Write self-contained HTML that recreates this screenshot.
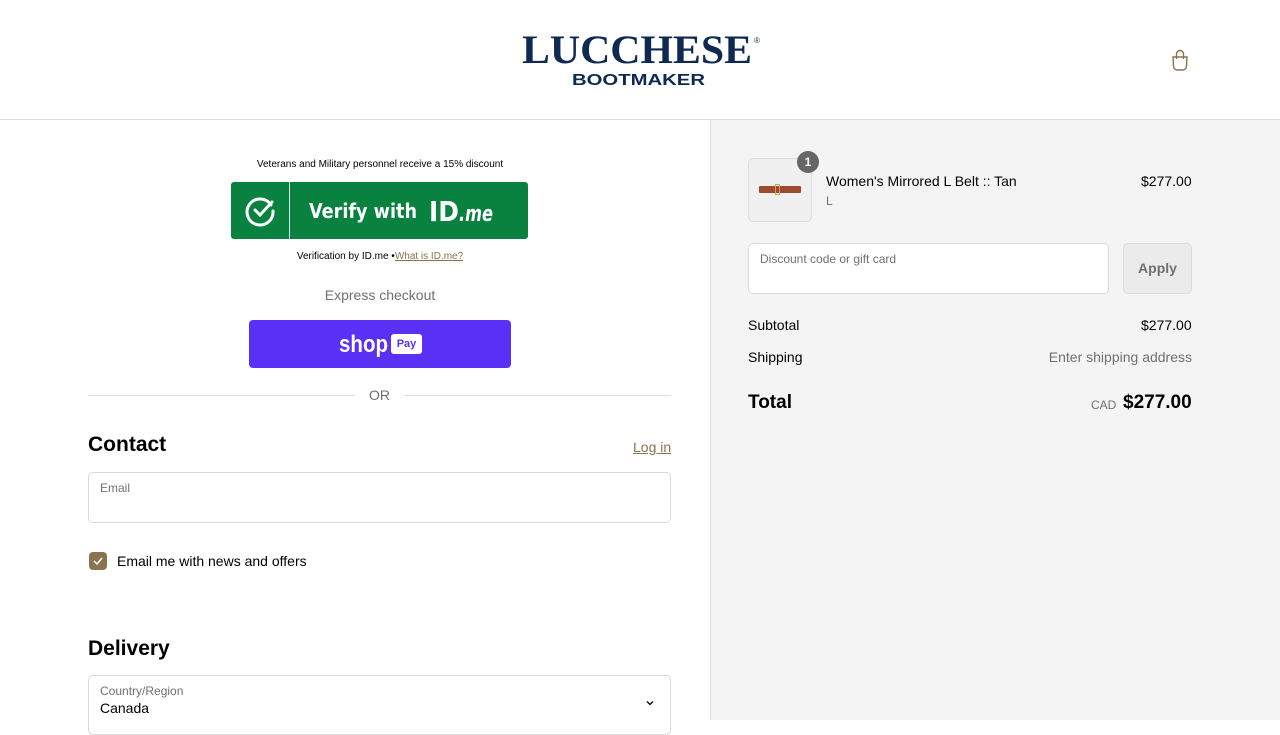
<!DOCTYPE html>
<html><head><meta charset="utf-8"><style>
*{box-sizing:border-box;margin:0;padding:0}
body{width:1280px;height:720px;overflow:hidden;font-family:"Liberation Sans",Arial,sans-serif;background:#fff;position:relative;color:#000}
.abs{position:absolute}
header{position:absolute;left:0;top:0;width:1280px;height:120px;border-bottom:1px solid #dedede;background:#fff}
.right{position:absolute;left:710px;top:120px;width:570px;height:600px;background:#f4f4f4;border-left:1px solid #dedede}
.field{position:absolute;border:1px solid #d9d9d9;border-radius:5px;background:#fff}
.lab{position:absolute;left:11px;top:8px;font-size:12px;color:#707070}
</style></head><body>
<header>
 <svg class="abs" style="left:520px;top:28px" width="250" height="62">
  <text x="2" y="35" font-family="Liberation Serif" font-weight="bold" font-size="40" fill="#0e2a52" textLength="230" lengthAdjust="spacingAndGlyphs">LUCCHESE</text>
  <text x="234" y="15" font-family="Liberation Sans" font-size="8" fill="#0e2a52">®</text>
  <text x="52" y="57" font-family="Liberation Sans" font-weight="bold" font-size="16" fill="#0e2a52" textLength="133" lengthAdjust="spacingAndGlyphs">BOOTMAKER</text>
 </svg>
 <svg class="abs" style="left:1170px;top:49px" width="20" height="22" viewBox="0 0 20 22" fill="none" stroke="#8a7350" stroke-width="1.4"><path d="M3 8h14l-0.5 9a4 4 0 0 1-4 4h-5a4 4 0 0 1-4-4z"/><path d="M6.5 10V5a3.5 3.5 0 0 1 7 0v5"/></svg>
</header>
<div class="abs" style="left:0;top:159px;width:760px;text-align:center;font-size:10px;color:#000">Veterans and Military personnel receive a 15% discount</div>
<div class="abs" style="left:231px;top:182px;width:297px;height:57px;background:#08823e;border-radius:3px">
 <div class="abs" style="left:58px;top:0;width:1px;height:57px;background:#e0f0e6"></div>
 <svg class="abs" style="left:14px;top:13px" width="32" height="32" viewBox="0 0 32 32" fill="none" stroke="#fff" stroke-width="3" stroke-linecap="round"><path d="M26 10A13 13 0 1 0 28 16"/><path d="M10 15l5 5 12-13"/></svg>
 <svg class="abs" style="left:78px;top:10px" width="190" height="36">
  <text x="0" y="26" font-family="DejaVu Sans" font-weight="bold" font-size="20" fill="#fff" textLength="108" lengthAdjust="spacingAndGlyphs">Verify with</text>
  <text x="120" y="29" font-family="DejaVu Sans" font-weight="bold" font-size="28" fill="#fff" textLength="30" lengthAdjust="spacingAndGlyphs">ID</text>
  <text x="150" y="29" font-family="DejaVu Sans" font-weight="bold" font-style="italic" font-size="22" fill="#fff" textLength="34" lengthAdjust="spacingAndGlyphs">.me</text>
 </svg>
</div>
<div class="abs" style="left:0;top:251px;width:760px;text-align:center;font-size:10px;color:#000">Verification by ID.me •<span style="color:#8a7350;text-decoration:underline">What is ID.me?</span></div>
<div class="abs" style="left:0;top:287px;width:760px;text-align:center;font-size:14px;color:#707070">Express checkout</div>
<div class="abs" style="left:249px;top:320px;width:262px;height:48px;background:#5a31f4;border-radius:4px">
 <svg class="abs" style="left:90px;top:8px" width="52" height="32"><text x="0" y="24" font-family="Liberation Sans" font-weight="bold" font-size="24" fill="#fff" textLength="49" lengthAdjust="spacingAndGlyphs">shop</text></svg>
 <div class="abs" style="left:142px;top:14px;width:31px;height:20px;background:#fff;border-radius:3px;color:#5a31f4;font-size:11px;font-weight:bold;text-align:center;line-height:20px">Pay</div>
</div>
<div class="abs" style="left:88px;top:395px;width:267px;height:1px;background:#dedede"></div>
<div class="abs" style="left:404px;top:395px;width:267px;height:1px;background:#dedede"></div>
<div class="abs" style="left:369px;top:387px;font-size:14px;color:#707070">OR</div>
<div class="abs" style="left:88px;top:433px;font-size:21px;font-weight:bold">Contact</div>
<div class="abs" style="left:633px;top:439px;font-size:14px;color:#8a7350;text-decoration:underline">Log in</div>
<div class="field" style="left:88px;top:472px;width:583px;height:51px"><div class="lab">Email</div></div>
<div class="abs" style="left:89px;top:552px;width:18px;height:18px;background:#8a7350;border-radius:4px"><svg width="18" height="18" viewBox="0 0 18 18" fill="none" stroke="#fff" stroke-width="1.5"><path d="M5 9l3 3 5-6"/></svg></div>
<div class="abs" style="left:117px;top:553px;font-size:14px">Email me with news and offers</div>
<div class="abs" style="left:88px;top:637px;font-size:21px;font-weight:bold">Delivery</div>
<div class="field" style="left:88px;top:675px;width:583px;height:60px"><div class="lab">Country/Region</div><div class="abs" style="left:11px;top:24px;font-size:14px">Canada</div>
<svg class="abs" style="left:555px;top:21px" width="12" height="12" viewBox="0 0 12 12" fill="none" stroke="#000" stroke-width="1.3"><path d="M3 4.5l3 3 3-3"/></svg></div>
<div class="right">
 <div class="abs" style="left:37px;top:38px;width:64px;height:64px;border:1px solid #ddd;border-radius:5px;background:#f0f0f0">
  <div class="abs" style="left:10px;top:27px;width:42px;height:7px;background:#9c4a2e;border-radius:1px"></div>
  <div class="abs" style="left:26px;top:25px;width:5px;height:11px;border:1px solid #c9a45a"></div>
 </div>
 <div class="abs" style="left:86px;top:31px;width:22px;height:22px;border-radius:11px;background:#666;color:#fff;font-size:12px;font-weight:bold;text-align:center;line-height:22px">1</div>
 <div class="abs" style="left:115px;top:53px;font-size:14px">Women's Mirrored L Belt :: Tan</div>
 <div class="abs" style="left:115px;top:74px;font-size:12px;color:#707070">L</div>
 <div class="abs" style="left:430px;top:53px;font-size:14px">$277.00</div>
 <div class="field" style="left:37px;top:123px;width:361px;height:51px"><div class="lab">Discount code or gift card</div></div>
 <div class="abs" style="left:412px;top:123px;width:69px;height:51px;border:1px solid #ddd;border-radius:5px;background:#ebebeb;color:#707070;font-size:14px;font-weight:bold;text-align:center;line-height:49px">Apply</div>
 <div class="abs" style="left:37px;top:197px;font-size:14px">Subtotal</div>
 <div class="abs" style="left:430px;top:197px;font-size:14px">$277.00</div>
 <div class="abs" style="left:37px;top:229px;font-size:14px">Shipping</div>
 <div class="abs" style="right:88px;top:229px;font-size:14px;color:#707070">Enter shipping address</div>
 <div class="abs" style="left:37px;top:272px;font-size:19px;font-weight:bold">Total</div>
 <div class="abs" style="left:380px;top:278px;font-size:12px;color:#707070">CAD</div>
 <div class="abs" style="left:412px;top:272px;font-size:19px;font-weight:bold">$277.00</div>
</div>
</body></html>
